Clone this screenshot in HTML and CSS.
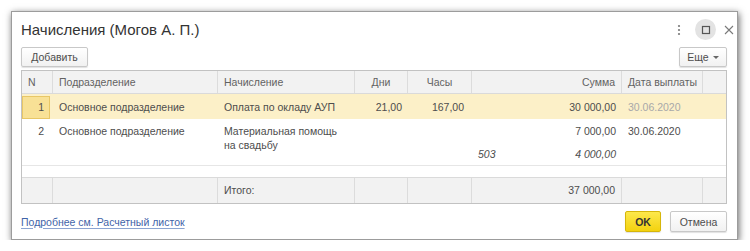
FILE: index.html
```html
<!DOCTYPE html>
<html lang="ru">
<head>
  <meta charset="UTF-8">
  <title>Начисления</title>
  <link rel="stylesheet" href="styles.css">
</head>
<body>

<!-- Dialog window -->
<div class="dialog">
  <div class="titlebar">
    <h1 class="title">Начисления (Могов А. П.)</h1>
    <div class="win-controls">
      <span class="ctl ctl-more">
        <svg width="4" height="12" viewBox="0 0 4 12"><circle cx="2" cy="2" r="1.1" fill="#7a7a7a"/><circle cx="2" cy="6" r="1.1" fill="#7a7a7a"/><circle cx="2" cy="10" r="1.1" fill="#7a7a7a"/></svg>
      </span>
      <span class="ctl ctl-max">
        <svg width="10" height="10" viewBox="0 0 10 10"><rect x="1.5" y="1.5" width="7" height="7" fill="none" stroke="#555" stroke-width="1.2"/></svg>
      </span>
      <span class="ctl ctl-close">
        <svg width="10" height="10" viewBox="0 0 10 10"><path d="M1 1 L9 9 M9 1 L1 9" stroke="#7a7a7a" stroke-width="1.1"/></svg>
      </span>
    </div>
  </div>

  <div class="toolbar">
    <button class="btn btn-add">Добавить</button>
    <button class="btn btn-more">Еще <span class="caret"></span></button>
  </div>

  <!-- Grid -->
  <div class="grid">
    <div class="row head">
      <div class="cell">N</div>
      <div class="cell">Подразделение</div>
      <div class="cell">Начисление</div>
      <div class="cell center">Дни</div>
      <div class="cell center">Часы</div>
      <div class="cell right">Сумма</div>
      <div class="cell">Дата выплаты</div>
      <div class="cell"></div>
    </div>

    <div class="row body current">
      <div class="cell right num-cell">1</div>
      <div class="cell">Основное подразделение</div>
      <div class="cell">Оплата по окладу АУП</div>
      <div class="cell right">21,00</div>
      <div class="cell right pad-r">167,00</div>
      <div class="cell right">30 000,00</div>
      <div class="cell dim">30.06.2020</div>
      <div class="cell"></div>
    </div>

    <div class="row body tall">
      <div class="cell right">2</div>
      <div class="cell">Основное подразделение</div>
      <div class="cell">Материальная помощь<br>на свадьбу</div>
      <div class="cell"></div>
      <div class="cell"></div>
      <div class="cell">
        <div class="right">7 000,00</div>
        <div class="sub-line">
          <span>503</span>
          <span>4 000,00</span>
        </div>
      </div>
      <div class="cell">30.06.2020</div>
      <div class="cell"></div>
    </div>

    <div class="row filler"></div>

    <div class="row foot">
      <div class="cell"></div>
      <div class="cell"></div>
      <div class="cell">Итого:</div>
      <div class="cell"></div>
      <div class="cell"></div>
      <div class="cell right">37 000,00</div>
      <div class="cell"></div>
      <div class="cell"></div>
    </div>
  </div>

  <div class="bottom">
    <a class="link" href="#">Подробнее см. Расчетный листок</a>
    <div class="actions">
      <button class="btn btn-ok">OK</button>
      <button class="btn btn-cancel">Отмена</button>
    </div>
  </div>
</div>

</body>
</html>
```

FILE: styles.css
```css
/* General Reset */
* {
  margin: 0;
  padding: 0;
  box-sizing: border-box;
  font-family: "Liberation Sans", Arial, sans-serif;
}

body {
  background-color: #fff;
  color: #4d4d4d;
  font-size: 10.5px;
}

/* Dialog */
.dialog {
  margin: 11px 0 0 11px;
  width: 727px;
  height: 229px;
  background: #fff;
  border: 1px solid #9c9c9c;
  box-shadow: 1px 2px 7px rgba(0, 0, 0, 0.6);
  padding: 0 10px 0 9px;
  display: flex;
  flex-direction: column;
}

.titlebar {
  height: 35px;
  display: flex;
  justify-content: space-between;
  align-items: center;
}

.title {
  font-size: 15px;
  font-weight: normal;
  color: #333;
}

.win-controls {
  display: flex;
  align-items: center;
  margin-right: -9px;
}

.ctl {
  display: flex;
  align-items: center;
  justify-content: center;
}

.ctl-more {
  width: 4px;
  margin-right: 14px;
}

.ctl-max {
  width: 21px;
  height: 21px;
  border-radius: 50%;
  background: #e3e3e3;
  margin-right: 6px;
}

.ctl-close {
  width: 14px;
  height: 14px;
}

/* Buttons */
.toolbar {
  height: 20px;
  display: flex;
  justify-content: space-between;
}

.btn {
  height: 20px;
  padding: 0 9px;
  font-size: 10.5px;
  color: #4d4d4d;
  background: linear-gradient(#ffffff, #f1f1f1);
  border: 1px solid #c8c8c8;
  border-radius: 2px;
  box-shadow: 0 1px 1px rgba(0, 0, 0, 0.12);
  cursor: pointer;
}

.btn-add {
  width: 67px;
}

.btn-more {
  width: 48px;
  display: flex;
  align-items: center;
  justify-content: center;
  gap: 4px;
}

.caret {
  border-left: 3px solid transparent;
  border-right: 3px solid transparent;
  border-top: 3px solid #666;
  margin-top: 1px;
}

/* Grid */
.grid {
  margin-top: 3px;
  width: 706px;
  border: 1px solid #c2c2c2;
}

.row {
  display: grid;
  grid-template-columns: 31px 165px 137px 53px 64px 150px 81px 1fr;
}

.cell {
  padding: 0 6px;
  white-space: nowrap;
}

.center {
  text-align: center;
}

.right {
  text-align: right;
}

.head {
  height: 23px;
  background: #f2f2f2;
  border-bottom: 1px solid #dadada;
  color: #626262;
}

.head .cell,
.foot .cell {
  border-right: 1px solid #dcdcdc;
  line-height: 22px;
}

.head .cell:last-child,
.foot .cell:last-child {
  border-right: none;
}

.body .cell {
  line-height: 14px;
}

.current {
  height: 25px;
  background: #fcf0c8;
  align-items: center;
}

.current .num-cell {
  align-self: stretch;
  margin: 2px 3px 0 0;
  line-height: 21px;
  padding-right: 5px;
  background: #f8e196;
  border: 1px solid #e8c766;
}

.pad-r {
  padding-right: 8px;
}

.dim {
  color: #a8a8a8;
}

.tall {
  height: 47px;
  padding-top: 5px;
  border-bottom: 1px solid #e6e6e6;
}

.tall .cell:first-child {
  padding-right: 9px;
}

.sub-line {
  margin-top: 9px;
  display: flex;
  justify-content: space-between;
  font-style: italic;
}

.filler {
  height: 11px;
}

.foot {
  height: 26px;
  background: #f2f2f2;
  border-top: 1px solid #dadada;
}

.foot .cell {
  line-height: 25px;
}

/* Bottom bar */
.bottom {
  flex: 1;
  display: flex;
  justify-content: space-between;
  align-items: center;
}

.link {
  color: #3f64a8;
  text-decoration: underline;
  text-decoration-color: #8ba4d2;
  text-underline-offset: 2px;
}

.actions {
  display: flex;
  gap: 9px;
}

.actions .btn {
  height: 21px;
}

.btn-ok {
  width: 36px;
  padding: 0;
  font-weight: bold;
  color: #333;
  background: linear-gradient(#fde84c, #f3d20f);
  border-color: #d6b60a;
}

.btn-cancel {
  width: 57px;
  padding: 0;
}
```
